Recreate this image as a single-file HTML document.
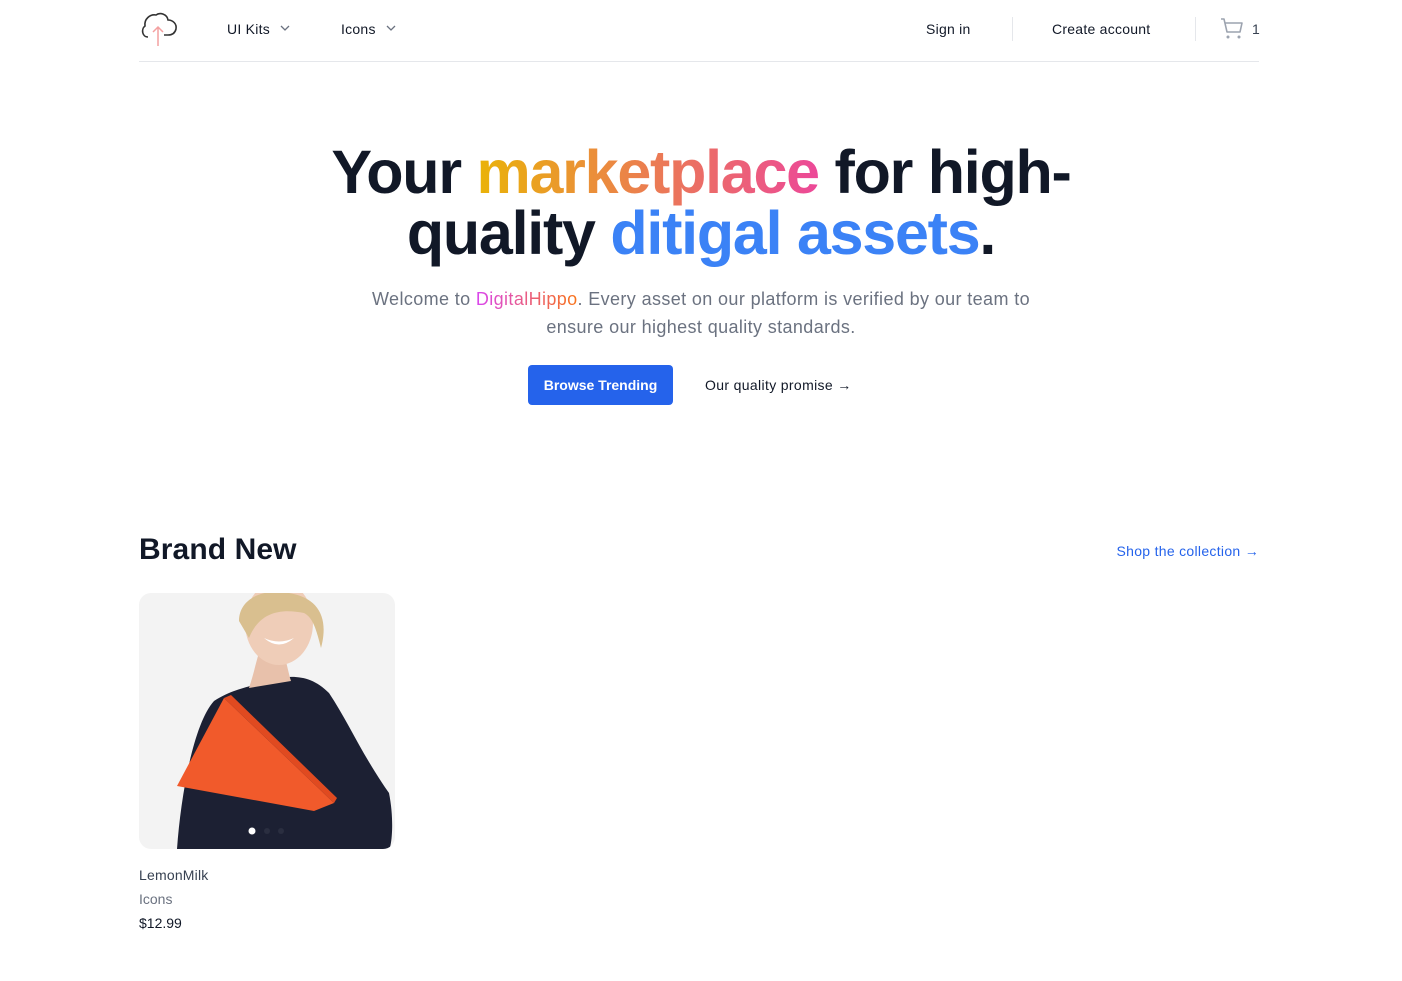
<!DOCTYPE html>
<html><head><meta charset="utf-8"><style>
*{margin:0;padding:0;box-sizing:border-box}
body{width:1402px;height:981px;background:#fff;font-family:"Liberation Sans",sans-serif;color:#111827;position:relative;overflow:hidden}
.a{position:absolute;white-space:nowrap}
.nav{font-size:14px;color:#111827;letter-spacing:0.25px}
h1{position:absolute;left:0;width:1402px;text-align:center;font-size:61px;font-weight:bold;letter-spacing:-1.25px;line-height:61px;top:142px;color:#111827}
.g{background:linear-gradient(90deg,#eab308,#ec4899);-webkit-background-clip:text;background-clip:text;color:transparent}
.b{color:#3b82f6}
.sub{position:absolute;left:0;width:1402px;text-align:center;font-size:18px;line-height:28px;color:#6b7280;top:285px;letter-spacing:0.38px}
.dh{background:linear-gradient(90deg,#d946ef,#f97316);-webkit-background-clip:text;background-clip:text;color:transparent}
</style></head><body>
<svg class="a" style="left:140px;top:11px" width="38" height="36" viewBox="0 0 38 36"><path d="M8 26 C2 26 1 18 5 15 C4 8 10 3 16 4 C20 1 27 3 28 9 C33 9 37 13 36 18 C35 22 32 24 28 24 L24 24" fill="none" stroke="#333" stroke-width="1.6"/><path d="M18 35 V16 M13 21 L18 16 L23 21" fill="none" stroke="#f4a0a0" stroke-width="1.5"/></svg>
<div class="a nav" style="left:227px;top:21px">UI Kits</div>
<svg class="a" style="left:280px;top:24px" width="10" height="8"><path d="M1 2 L5 6 L9 2" fill="none" stroke="#6b7280" stroke-width="1.3"/></svg>
<div class="a nav" style="left:341px;top:21px">Icons</div>
<svg class="a" style="left:386px;top:24px" width="10" height="8"><path d="M1 2 L5 6 L9 2" fill="none" stroke="#6b7280" stroke-width="1.3"/></svg>
<div class="a nav" style="left:926px;top:21px">Sign in</div>
<div class="a" style="left:1012px;top:17px;width:1px;height:24px;background:#e5e7eb"></div>
<div class="a nav" style="left:1052px;top:21px">Create account</div>
<div class="a" style="left:1195px;top:17px;width:1px;height:24px;background:#e5e7eb"></div>
<svg class="a" style="left:1220px;top:17px" width="25" height="24" viewBox="0 0 25 24"><path d="M1 2 H4 L7 15 H20 L22 6 H5" fill="none" stroke="#9ca3af" stroke-width="1.6" stroke-linejoin="round"/><circle cx="8" cy="20" r="1.5" fill="#9ca3af"/><circle cx="19" cy="20" r="1.5" fill="#9ca3af"/></svg>
<div class="a nav" style="left:1252px;top:21px;color:#374151">1</div>
<div class="a" style="left:139px;top:61px;width:1120px;height:1px;background:#e5e7eb"></div>
<h1>Your <span class="g">marketplace</span> for high-<br>quality <span class="b">ditigal assets</span>.</h1>
<div class="sub">Welcome to <span class="dh">DigitalHippo</span>. Every asset on our platform is verified by our team to<br>ensure our highest quality standards.</div>
<div class="a" style="left:528px;top:365px;width:145px;height:40px;background:#2563eb;border-radius:4px;color:#fff;font-size:14px;font-weight:bold;text-align:center;line-height:40px">Browse Trending</div>
<div class="a" style="left:705px;top:377px;font-size:14px;color:#111827;letter-spacing:0.35px">Our quality promise →</div>
<div class="a" style="left:139px;top:533px;font-size:30px;font-weight:bold;letter-spacing:0.1px">Brand New</div>
<div class="a" style="right:143px;top:543px;font-size:14px;color:#2563eb;letter-spacing:0.3px">Shop the collection →</div>
<div class="a" style="left:139px;top:593px;width:256px;height:256px;border-radius:12px;overflow:hidden;background:#f3f3f3">
<svg width="256" height="256" viewBox="0 0 256 256">
<path d="M38 256 C42 200 55 130 75 108 C95 95 110 95 125 88 C150 82 170 80 190 100 C210 130 222 160 250 200 C256 230 252 256 250 256 Z" fill="#1c2033"/>
<path d="M110 95 C115 80 118 65 120 60 L145 60 C148 72 150 82 152 88 Z" fill="#e8c1ab"/>
<ellipse cx="140" cy="30" rx="34" ry="42" fill="#efcdb8"/>
<path d="M100 28 C100 5 125 -5 150 0 C180 5 190 25 182 55 C178 40 175 25 165 20 C140 15 120 20 110 45 Z" fill="#d9bf8f"/>
<path d="M125 45 Q140 58 155 45 Q140 52 125 45Z" fill="#fff"/>
<path d="M38 193 L85 105 L195 210 L175 218 Z" fill="#f15a2b"/>
<path d="M85 105 L195 210 L198 205 L92 102Z" fill="#e04a20"/>
<circle cx="113" cy="238" r="3.5" fill="#fff"/><circle cx="128" cy="238" r="3" fill="#2a2e40"/><circle cx="142" cy="238" r="3" fill="#2a2e40"/>
</svg></div>
<div class="a" style="left:139px;top:867px;font-size:14px;color:#374151;letter-spacing:0.2px">LemonMilk</div>
<div class="a" style="left:139px;top:891px;font-size:14px;color:#6b7280">Icons</div>
<div class="a" style="left:139px;top:915px;font-size:14px;color:#111827">$12.99</div>
</body></html>
